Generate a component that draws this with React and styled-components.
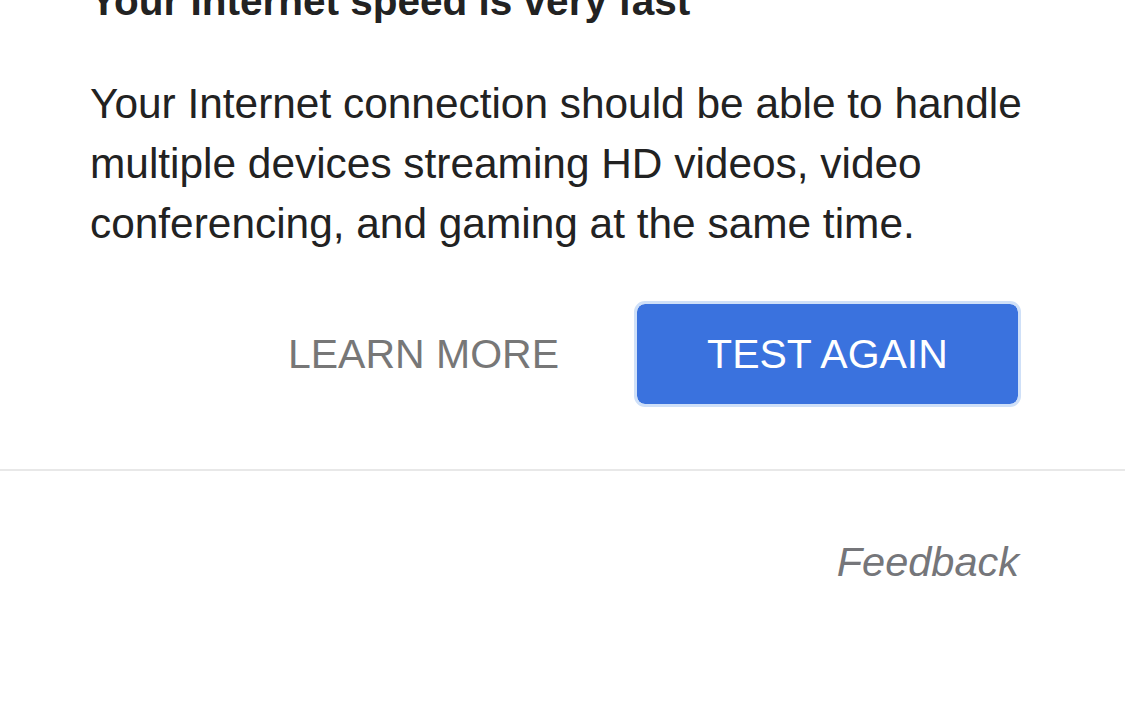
import React from "react";
import styled, { createGlobalStyle } from "styled-components";

const GlobalStyle = createGlobalStyle`
  html, body {
    margin: 0;
    padding: 0;
    background: #ffffff;
    overflow: hidden;
  }
  body {
    font-family: "Liberation Sans", Arial, Helvetica, sans-serif;
  }
`;

const Page = styled.div`
  width: 1125px;
  height: 720px;
  overflow: hidden;
  background: #ffffff;
`;

const Result = styled.section`
  padding: 0 100px 0 90px;
  margin-top: -21px;
`;

const Heading = styled.h2`
  margin: 0;
  font-size: 40.5px;
  line-height: 44px;
  font-weight: 700;
  color: #222222;
`;

const Description = styled.p`
  margin: 51px 0 0;
  font-size: 42.4px;
  line-height: 60px;
  color: #222222;
`;

const Actions = styled.div`
  display: flex;
  justify-content: flex-end;
  align-items: center;
  gap: 75px;
  margin-top: 47px;
  margin-right: 4px;
  padding-bottom: 62px;
`;

const TextButton = styled.button`
  border: none;
  background: none;
  padding: 0;
  font-family: inherit;
  font-size: 41px;
  color: #777777;
  cursor: pointer;
`;

const PrimaryButton = styled.button`
  width: 387px;
  height: 106px;
  box-sizing: border-box;
  border: 3px solid #cfe0f8;
  border-radius: 11px;
  background: #3a72de;
  background-clip: padding-box;
  font-family: inherit;
  font-size: 41px;
  color: #ffffff;
  cursor: pointer;
`;

const Divider = styled.hr`
  margin: 0;
  border: none;
  height: 2px;
  background: #e8e8e8;
`;

const Footer = styled.footer`
  display: flex;
  justify-content: flex-end;
  padding: 69px 106px 0 0;
`;

const FeedbackLink = styled.a`
  font-size: 41.5px;
  line-height: 44px;
  font-style: italic;
  color: #75767a;
  text-decoration: none;
`;

export default function App() {
  return (
    <Page>
      <GlobalStyle />
      <Result>
        <Heading>Your Internet speed is very fast</Heading>
        <Description>
          Your Internet connection should be able to handle multiple devices
          streaming HD videos, video conferencing, and gaming at the same time.
        </Description>
        <Actions>
          <TextButton>LEARN MORE</TextButton>
          <PrimaryButton>TEST AGAIN</PrimaryButton>
        </Actions>
      </Result>
      <Divider />
      <Footer>
        <FeedbackLink href="#">Feedback</FeedbackLink>
      </Footer>
    </Page>
  );
}
